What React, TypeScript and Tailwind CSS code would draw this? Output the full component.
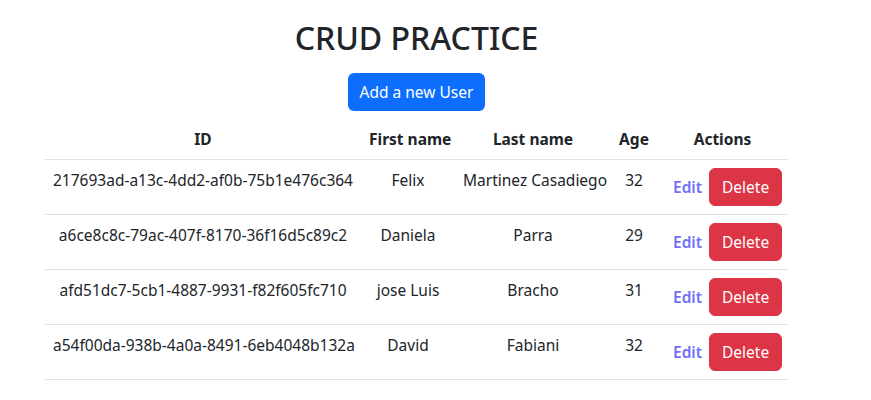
import type { FC } from "react";

type User = { id: string; first: string; last: string; age: number };

const users: User[] = [
    { id: "217693ad-a13c-4dd2-af0b-75b1e476c364", first: "Felix", last: "Martinez Casadiego", age: 32 },
    { id: "a6ce8c8c-79ac-407f-8170-36f16d5c89c2", first: "Daniela", last: "Parra", age: 29 },
    { id: "afd51dc7-5cb1-4887-9931-f82f605fc710", first: "jose Luis", last: "Bracho", age: 31 },
    { id: "a54f00da-938b-4a0a-8491-6eb4048b132a", first: "David", last: "Fabiani", age: 32 },
];

const UserRow: FC<{ user: User }> = ({ user }) => (
    <tr className="border-b border-[#dee2e6]">
        <td className="p-2 align-top">{user.id}</td>
        <td className="p-2 align-top">{user.first}</td>
        <td className="p-2 align-top">{user.last}</td>
        <td className="p-2 align-top">{user.age}</td>
        <td className="p-2 align-top">
            <span className="font-semibold text-[#6f6ffa] mr-[7px] ml-2">Edit</span>
            <button className="bg-[#dc3545] text-white rounded-md px-3 h-[38px] leading-6 border border-[#dc3545]">Delete</button>
        </td>
    </tr>
);

export default function App() {
    return (
        <div className="min-h-screen bg-white text-[#212529] font-['Noto_Sans',sans-serif]">
            <div className="w-[743px] ml-[45px] flex flex-col items-center">
                <h1 className="mt-[17px] text-[32px] leading-[42px] font-medium">CRUD PRACTICE</h1>
                <button className="mt-[14px] bg-[#0d6efd] text-white rounded-md px-3 h-[38px] text-[15.5px] leading-6">
                    Add a new User
                </button>
                <table className="mt-2 w-full table-fixed text-center text-[15.5px] leading-6 whitespace-nowrap">
                    <thead>
                        <tr className="border-b border-[#dee2e6]">
                            <th className="w-[316px] p-2 font-bold">ID</th>
                            <th className="w-[94px] p-2 font-bold">First name</th>
                            <th className="w-[156px] p-2 font-bold">Last name</th>
                            <th className="w-[46px] p-2 font-bold">Age</th>
                            <th className="p-2 font-bold">Actions</th>
                        </tr>
                    </thead>
                    <tbody>
                        {users.map((u) => (
                            <UserRow key={u.id} user={u} />
                        ))}
                    </tbody>
                </table>
            </div>
        </div>
    );
}
